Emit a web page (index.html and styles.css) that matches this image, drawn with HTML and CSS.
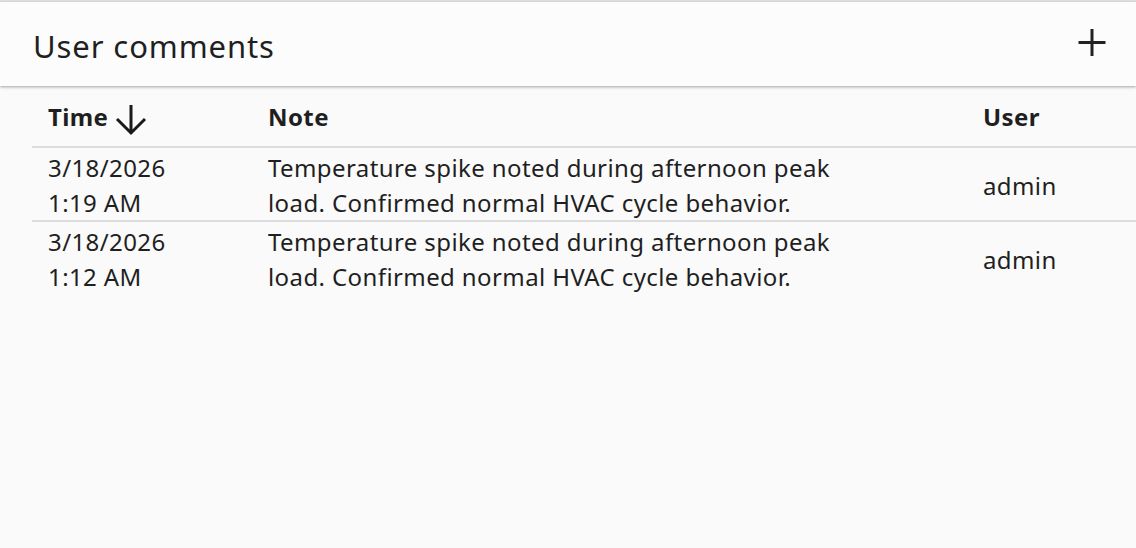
FILE: index.html
```html
<!DOCTYPE html>
<html>
<head>
<meta charset="utf-8">
<link rel="stylesheet" href="styles.css">
</head>
<body>
<section class="panel">
  <header class="panel-header">
    <h1 class="panel-title">User comments</h1>
    <button class="add-btn" aria-label="Add comment">
      <svg width="32" height="32" viewBox="0 0 32 32"><path d="M16 3v27M2.5 16.5h27" stroke="#222" stroke-width="3" fill="none"/></svg>
    </button>
  </header>
  <div class="table-wrap">
    <table class="comments">
      <thead>
        <tr>
          <th class="col-time"><span class="th-inner">Time
            <svg class="sort-icon" width="34" height="34" viewBox="0 0 34 34"><path d="M17 3v28M3 17l14 14 14-14" stroke="#1a1a1a" stroke-width="3" fill="none"/></svg></span></th>
          <th class="col-note">Note</th>
          <th class="col-user">User</th>
        </tr>
      </thead>
      <tbody>
        <tr>
          <td class="col-time">3/18/2026<br>1:19 AM</td>
          <td class="col-note"><div class="note-text">Temperature spike noted during afternoon peak load. Confirmed normal HVAC cycle behavior.</div></td>
          <td class="col-user">admin</td>
        </tr>
        <tr>
          <td class="col-time">3/18/2026<br>1:12 AM</td>
          <td class="col-note"><div class="note-text">Temperature spike noted during afternoon peak load. Confirmed normal HVAC cycle behavior.</div></td>
          <td class="col-user">admin</td>
        </tr>
      </tbody>
    </table>
  </div>
</section>
</body>
</html>
```

FILE: styles.css
```css
* { box-sizing: border-box; }
html, body {
  margin: 0;
  height: 100%;
}
body {
  background: #fafafa;
  font-family: "Noto Sans", Roboto, sans-serif;
  color: #1f1f1f;
}
.panel {
  height: 548px;
  border-top: 2px solid #e2e2e2;
  background: #fafafa;
  display: flex;
  flex-direction: column;
}
.panel-header {
  height: 84px;
  flex: none;
  background: #fcfcfc;
  box-shadow: 0 1px 3px rgba(0,0,0,0.35);
  display: flex;
  align-items: center;
  justify-content: space-between;
  padding: 0 28px 0 33px;
  position: relative;
  z-index: 1;
}
.panel-title {
  margin: 0;
  font-size: 31px;
  font-weight: 400;
  letter-spacing: 0.9px;
  line-height: 1;
  padding-top: 5px;
}
.add-btn {
  border: 0;
  background: none;
  padding: 0;
  width: 32px;
  height: 32px;
  display: flex;
  cursor: pointer;
  margin-bottom: 4px;
}
.table-wrap {
  padding: 1px 0 0 32px;
}
.comments {
  border-collapse: collapse;
  width: 100%;
  font-size: 24px;
  line-height: 35px;
  letter-spacing: 0.4px;
}
.comments th {
  text-align: left;
  font-weight: 700;
  height: 60px;
  padding: 0 16px;
  border-bottom: 2px solid #dcdcdc;
  vertical-align: middle;
}
.th-inner {
  display: inline-flex;
  align-items: center;
  gap: 6px;
}
.sort-icon { margin-top: 4px; }
.comments td {
  padding: 2px 16px 0;
  height: 72px;
  vertical-align: middle;
}
.comments tbody tr:first-child td {
  border-bottom: 2px solid #dcdcdc;
}
.col-time { width: 220px; }
.col-user { width: 169px; }
.note-text { max-width: 600px; }
```
